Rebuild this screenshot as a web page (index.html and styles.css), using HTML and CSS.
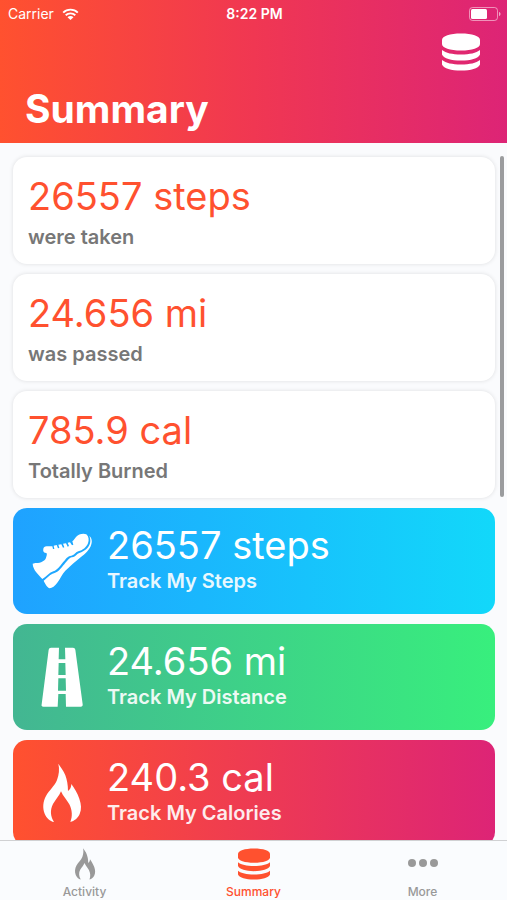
FILE: index.html
```html
<!DOCTYPE html>
<html lang="en">
<head>
<meta charset="UTF-8">
<meta name="viewport" content="width=device-width, initial-scale=1.0">
<title>Summary</title>
<link rel="stylesheet" href="styles.css">
</head>
<body>
<svg class="defs" aria-hidden="true">
  <symbol id="database" viewBox="0 0 38 38">
    <path d="M0 7C0 3 8 0.500 19 0.500S38 3 38 7v4c0 4-8 6.500-19 6.500S0 15 0 11z"/>
    <path d="M0 17c4 3 10 4.500 19 4.500S34 20 38 17v4.500c-2 4-9 6-19 6S2 25.500 0 21.500z"/>
    <path d="M0 27c4 3 10 4.500 19 4.500S34 30 38 27v4.500c-2 4-9 6-19 6S2 35.500 0 31.500z"/>
  </symbol>
  <symbol id="flame" viewBox="70 54 114 180">
    <path d="M116 56C122 66 132 76 137 91C142 105 145 119 145 138C151 134 155 127 155 117C164 130 173 144 179 161C185 178 186 193 180 207C175 219 164 228 152 231C159 215 158 196 149 178C141 164 130 154 124 139C119 153 108 163 100 177C91 194 92 214 103 231C91 229 80 219 75 206C68 189 70 169 79 153C89 135 105 123 112 105C118 89 120 72 116 56Z"/>
  </symbol>
</svg>
<header class="header">
  <div class="status">
    <div class="carrier">
      <span>Carrier</span>
      <svg class="wifi" viewBox="0 0 17 12">
        <path d="M1.200 4.600C5.200 0.600 11.800 0.600 15.800 4.600M3.700 7.300C6.400 4.700 10.600 4.700 13.300 7.300" fill="none" stroke="#fff" stroke-width="1.900"/>
        <path d="M5.500 9.200C7.200 7.600 9.800 7.600 11.500 9.200L8.500 12z" fill="#fff"/>
      </svg>
    </div>
    <time class="clock">8:22 PM</time>
    <svg class="battery" viewBox="0 0 32 14">
      <rect x="0.500" y="0.500" width="28" height="13" rx="3" fill="none" stroke="#fff" stroke-opacity="0.500"/>
      <rect x="2" y="2" width="16" height="10" rx="1.500" fill="#fff"/>
      <path d="M30 5c2 0.500 2 3.500 0 4z" fill="#fff" fill-opacity="0.600"/>
    </svg>
  </div>
  <div class="nav">
    <button class="nav-button" type="button" aria-label="Data">
      <svg class="nav-icon"><use href="#database"/></svg>
    </button>
  </div>
  <h1 class="title">Summary</h1>
</header>

<main class="content">
  <section class="totals">
    <div class="card">
      <p class="value">26557 steps</p>
      <p class="label">were taken</p>
    </div>
    <div class="card">
      <p class="value">24.656 mi</p>
      <p class="label">was passed</p>
    </div>
    <div class="card">
      <p class="value">785.9 cal</p>
      <p class="label">Totally Burned</p>
    </div>
  </section>
  <section class="trackers">
    <a class="tracker steps" href="#steps">
      <svg class="tracker-icon" viewBox="36 30 180 180">
        <path d="M38 128L46 126C61 127 75 120 78 110C80 104 82 99 79 96C72 96 68 91 70 83C71 77 76 74 85 76L97 76L99 84L103 84L101 74L110 72L114 82L118 81L115 71L124 70L129 80L133 79L129 68L138 67L143 77L147 75L143 65L150 64L156 73L160 71L157 61C162 57 166 50 171 45C179 39 190 36 199 40C206 46 208 57 204 67C199 79 188 88 175 91C165 94 165 102 154 104C142 105 137 115 129 124C119 136 113 147 100 151C88 155 81 165 67 174C56 161 39 148 38 128Z"/>
        <path d="M71 179C84 170 89 161 102 157C117 152 123 141 133 130C141 121 146 111 156 109C169 107 168 99 178 96C194 91 206 81 210 67C212 59 211 51 208 45C215 49 217 60 214 70C209 88 195 99 182 109C166 122 151 135 136 149C126 160 121 172 113 184C105 195 96 202 89 202C82 200 75 188 71 179Z"/>
      </svg>
      <div class="tracker-text">
        <p class="value">26557 steps</p>
        <p class="label">Track My Steps</p>
      </div>
    </a>
    <a class="tracker distance" href="#distance">
      <svg class="tracker-icon" viewBox="36 49 180 180">
        <path fill-rule="evenodd" d="M93 51H117L116 86H136L135 51H159Q165 51 166 57L188 221Q189 228 182 228H138L137 190H115L113 228H70Q63 228 65 221L86 57Q87 51 93 51ZM116 97L115 133H137L136 97ZM115 143L114 180H138L137 143Z"/>
      </svg>
      <div class="tracker-text">
        <p class="value">24.656 mi</p>
        <p class="label">Track My Distance</p>
      </div>
    </a>
    <a class="tracker calories" href="#calories">
      <svg class="tracker-icon"><use href="#flame"/></svg>
      <div class="tracker-text">
        <p class="value">240.3 cal</p>
        <p class="label">Track My Calories</p>
      </div>
    </a>
  </section>
  <div class="scroll-thumb"></div>
</main>

<nav class="tabs">
  <a class="tab" href="#activity">
    <svg class="tab-icon"><use href="#flame"/></svg>
    <span>Activity</span>
  </a>
  <a class="tab active" href="#summary">
    <svg class="tab-icon"><use href="#database"/></svg>
    <span>Summary</span>
  </a>
  <a class="tab" href="#more">
    <svg class="tab-icon" viewBox="0 0 32 32">
      <circle cx="5" cy="15" r="4"/>
      <circle cx="16" cy="15" r="4"/>
      <circle cx="27" cy="15" r="4"/>
    </svg>
    <span>More</span>
  </a>
</nav>
</body>
</html>
```
FILE: styles.css
```css
* {box-sizing:border-box;}
body {
  margin:0;
  height:100vh;
  display:flex;
  flex-direction:column;
  background:#fafbfd;
  font-family:Inter, "Liberation Sans", sans-serif;
}
h1, p {margin:0;}
a {color:inherit; text-decoration:none;}
.defs {display:none;}

/* header */
.header {
  flex:none;
  background:linear-gradient(to right, #ff512f, #f03752 50%, #dd2476);
  color:#fff;
  padding-bottom:10px;
}
.status {
  display:grid;
  grid-template-columns:1fr auto 1fr;
  align-items:center;
  height:27px;
  padding:0 6px 0 8px;
  font-size:14px;
}
.carrier {display:flex; align-items:center; gap:8px;}
.wifi {width:17px; height:12px;}
.clock {font-weight:600;}
.battery {width:32px; height:14px; justify-self:end;}
.nav {display:flex; justify-content:flex-end; height:58px; padding:6px 27px;}
.nav-button {padding:0; border:0; background:none; width:38px; height:38px; cursor:pointer;}
.nav-icon {display:block; width:38px; height:38px; fill:#fff;}
.title {padding-left:25px; font-size:39px; line-height:48px; font-weight:700;}

/* cards */
.content {
  flex:1;
  min-height:0;
  position:relative;
  overflow:hidden;
  padding:14px 12px 0 13px;
}
.totals, .trackers {display:flex; flex-direction:column; gap:10px;}
.trackers {margin-top:10px;}
.card {
  padding:15px;
  border-radius:14px;
  background:#fff;
  box-shadow:0 0 4px rgba(0,0,0,0.12);
}
.value {font-size:38px; line-height:48px; font-weight:400;}
.label {font-size:20px; line-height:24px; font-weight:600;}
.card .value {color:#ff512f;}
.card .label {margin-top:5px; color:#777;}
.tracker {
  display:flex;
  align-items:center;
  gap:15px;
  height:106px;
  padding:0 19px;
  border-radius:14px;
  color:#fff;
}
.tracker-text {padding-bottom:8px;}
.tracker .label {opacity:0.9;}
.tracker-icon {flex:none; width:60px; height:60px; fill:#fff;}
.steps {background:linear-gradient(to right, #1fa2ff, #12d8fa);}
.distance {background:linear-gradient(to right, #43b692, #38ef7d);}
.calories {background:linear-gradient(to right, #ff512f, #dd2476);}
.scroll-thumb {
  position:absolute;
  top:13px;
  right:3px;
  width:4px;
  height:341px;
  border-radius:2px;
  background:#9b9c9e;
}

/* tab bar */
.tabs {
  flex:none;
  display:flex;
  height:60px;
  border-top:1px solid #d0d1d3;
  background:#fafcfe;
}
.tab {
  flex:1;
  display:flex;
  flex-direction:column;
  align-items:center;
  gap:4px;
  padding-top:7px;
  color:#999;
  fill:#999;
  font-size:12px;
  line-height:16px;
  font-weight:500;
}
.tab-icon {width:32px; height:32px;}
.active {color:#ff512f; fill:#ff512f;}
```
